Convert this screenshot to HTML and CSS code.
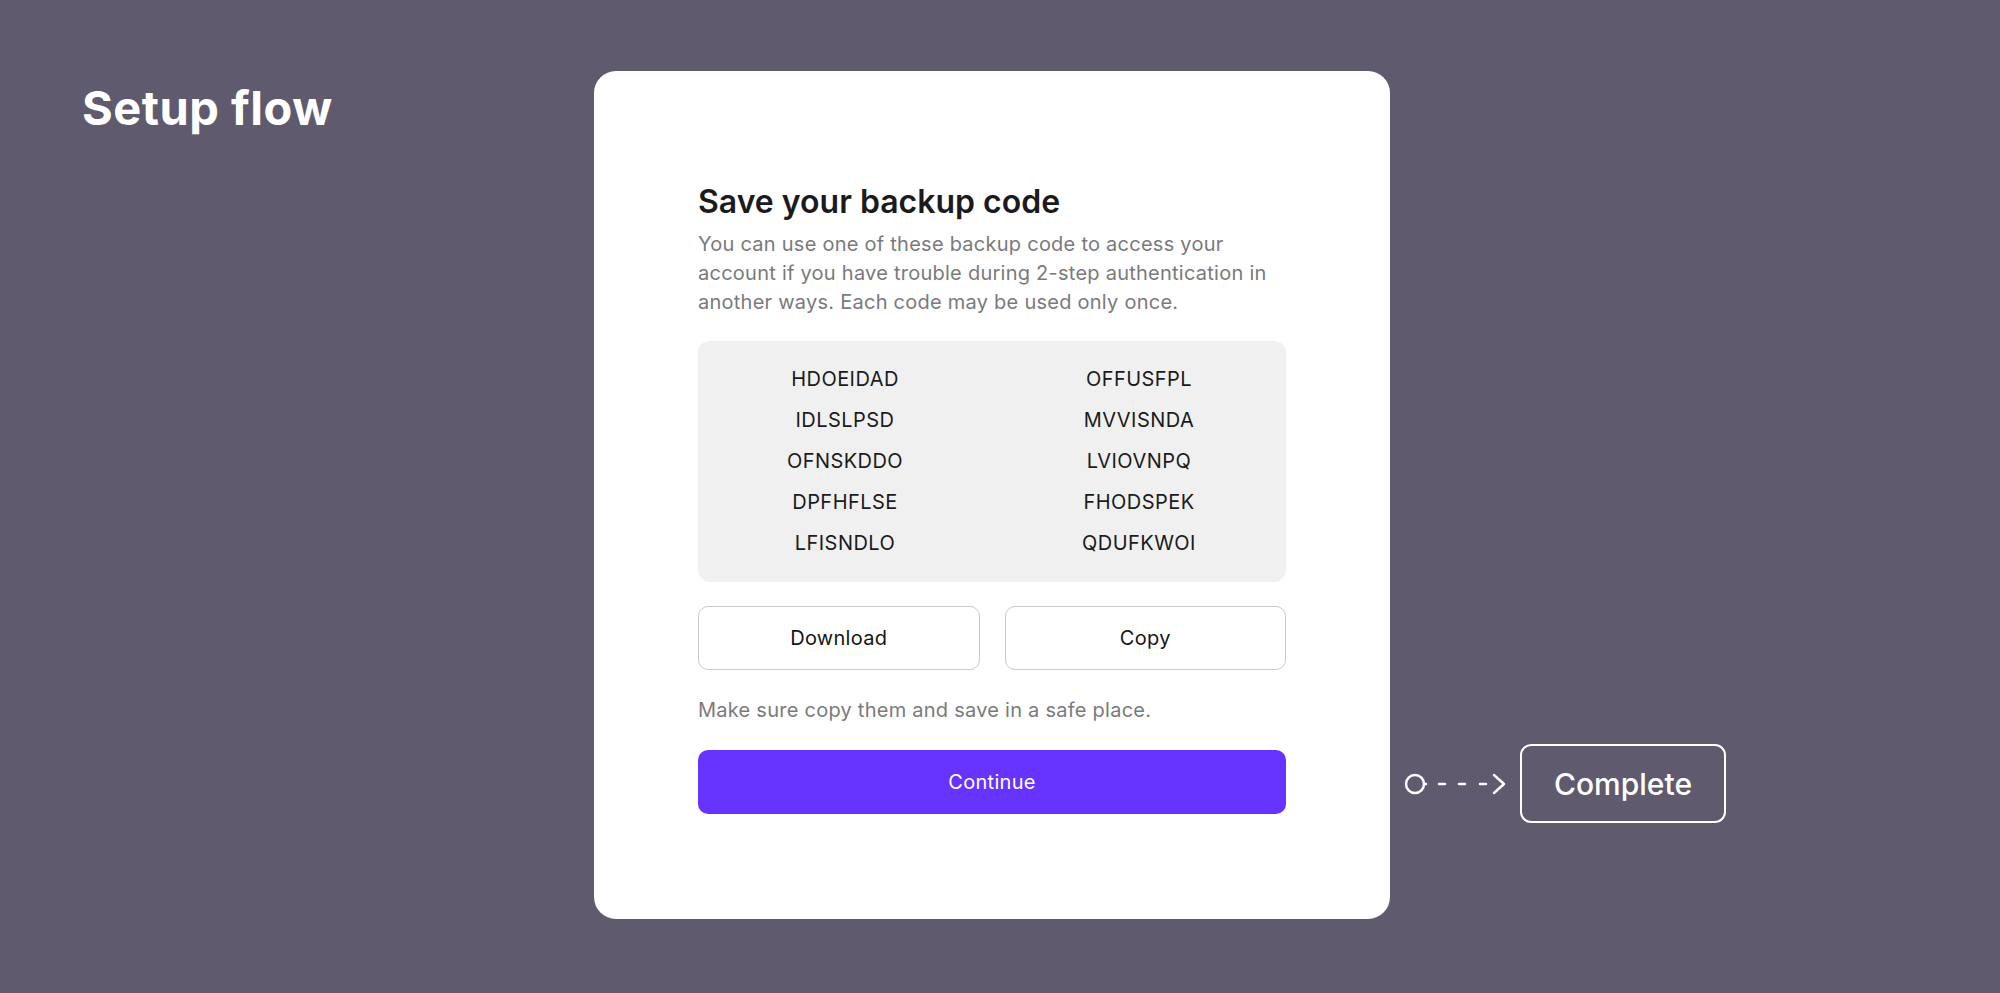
FILE: index.html
```html
<!DOCTYPE html>
<html lang="en">
<head>
<meta charset="utf-8">
<title>Setup flow</title>
<link rel="stylesheet" href="styles.css">
</head>
<body>
<div class="page">
  <h1 class="page-title">Setup flow</h1>
  <section class="card">
    <h2 class="card-title">Save your backup code</h2>
    <p class="card-desc">You can use one of these backup code to access your account if you have trouble during 2-step authentication in another ways. Each code may be used only once.</p>
    <div class="codes">
      <span>HDOEIDAD</span><span>OFFUSFPL</span>
      <span>IDLSLPSD</span><span>MVVISNDA</span>
      <span>OFNSKDDO</span><span>LVIOVNPQ</span>
      <span>DPFHFLSE</span><span>FHODSPEK</span>
      <span>LFISNDLO</span><span>QDUFKWOI</span>
    </div>
    <div class="actions">
      <button class="btn btn-outline">Download</button>
      <button class="btn btn-outline">Copy</button>
    </div>
    <p class="note">Make sure copy them and save in a safe place.</p>
    <button class="btn btn-primary">Continue</button>
  </section>
  <div class="flow">
    <svg class="connector" width="104" height="24" viewBox="0 0 104 24" fill="none" stroke="#ffffff" stroke-width="2.5" stroke-linecap="round" stroke-linejoin="round">
      <circle cx="12" cy="12" r="9"/>
      <line x1="21" y1="12" x2="23" y2="12"/>
      <line x1="36" y1="12" x2="42" y2="12"/>
      <line x1="56" y1="12" x2="62" y2="12"/>
      <line x1="77" y1="12" x2="83" y2="12"/>
      <polyline points="91,3 101,12 91,21"/>
    </svg>
    <div class="step-box">Complete</div>
  </div>
</div>
</body>
</html>
```

FILE: styles.css
```css
* { box-sizing: border-box; }

html, body {
  margin: 0;
  padding: 0;
}

body {
  background: #5f5a6e;
  font-family: Inter, "Noto Sans", "Liberation Sans", sans-serif;
  width: 2000px;
  height: 993px;
  overflow: hidden;
}

.page {
  display: flex;
  align-items: flex-start;
  padding: 71px 0 0 82px;
}

.page-title {
  width: 512px;
  flex: none;
  margin: 9px 0 0 0;
  color: #ffffff;
  font-size: 47px;
  font-weight: 700;
  line-height: 56px;
  letter-spacing: 0.5px;
}

.card {
  width: 796px;
  height: 848px;
  flex: none;
  background: #ffffff;
  border-radius: 22px;
  padding: 5px 104px 0 104px;
  display: flex;
  flex-direction: column;
  justify-content: center;
}

.card-title {
  margin: 0;
  font-size: 32px;
  font-weight: 600;
  line-height: 40px;
  color: #1b1b1d;
  letter-spacing: 0;
}

.card-desc {
  margin: 8px 0 0 0;
  font-size: 20px;
  line-height: 29px;
  color: #7a7a7d;
  letter-spacing: 0.25px;
}

.codes {
  margin-top: 24px;
  background: #eff0ef;
  border-radius: 12px;
  padding: 18px 0;
  display: grid;
  grid-template-columns: 1fr 1fr;
}

.codes span {
  text-align: center;
  font-size: 20px;
  line-height: 41px;
  color: #1b1b1d;
  letter-spacing: 0.45px;
}

.actions {
  margin-top: 24px;
  display: grid;
  grid-template-columns: 1fr 1fr;
  gap: 25px;
}

.btn {
  font-family: inherit;
  font-size: 20px;
  font-weight: 400;
  height: 64px;
  border-radius: 10px;
  cursor: pointer;
  letter-spacing: 0.3px;
}

.btn-outline {
  background: #ffffff;
  border: 1.5px solid #cacaca;
  color: #151517;
}

.note {
  margin: 26px 0 0 0;
  font-size: 20px;
  line-height: 29px;
  color: #7a7a7d;
  letter-spacing: 0.25px;
}

.btn-primary {
  margin-top: 25px;
  width: 100%;
  background: #6633ff;
  border: none;
  color: #ffffff;
}

.flow {
  display: flex;
  align-items: center;
  gap: 13px;
  margin: 673px 0 0 13px;
}

.connector {
  display: block;
  flex: none;
}

.step-box {
  height: 79px;
  padding: 0 32px;
  border: 2.5px solid #ffffff;
  border-radius: 11px;
  display: flex;
  align-items: center;
  color: #ffffff;
  font-size: 30px;
  font-weight: 500;
}
```
